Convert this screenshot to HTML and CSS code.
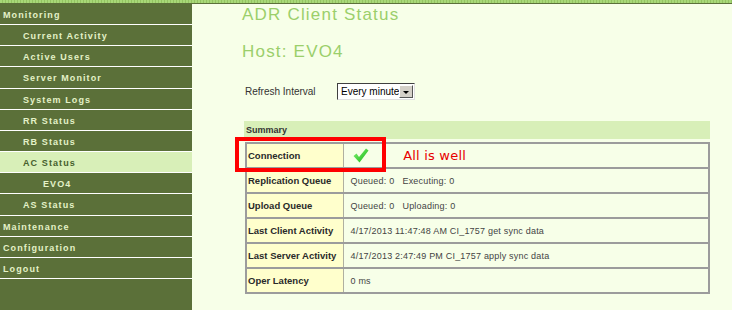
FILE: index.html
```html
<!DOCTYPE html>
<html lang="en">
<head>
    <meta charset="UTF-8">
    <title>ADR Client Status</title>
    <link rel="stylesheet" href="styles.css">
</head>
<body>
    <div class="top-strip"></div>
    <div class="layout">
        <nav class="sidebar">
            <a class="nav-item lvl0">Monitoring</a>
            <a class="nav-item lvl1">Current Activity</a>
            <a class="nav-item lvl1">Active Users</a>
            <a class="nav-item lvl1">Server Monitor</a>
            <a class="nav-item lvl1">System Logs</a>
            <a class="nav-item lvl1">RR Status</a>
            <a class="nav-item lvl1">RB Status</a>
            <a class="nav-item lvl1 active">AC Status</a>
            <a class="nav-item lvl2">EVO4</a>
            <a class="nav-item lvl1">AS Status</a>
            <a class="nav-item lvl0">Maintenance</a>
            <a class="nav-item lvl0">Configuration</a>
            <a class="nav-item lvl0">Logout</a>
        </nav>

        <main class="content">
            <h1>ADR Client Status</h1>
            <h2>Host: EVO4</h2>

            <div class="refresh-row">
                <span class="refresh-label">Refresh Interval</span>
                <div class="select-box">
                    <span class="select-value">Every minute</span>
                    <span class="select-btn"><span class="arrow"></span></span>
                </div>
            </div>

            <div class="summary-bar">Summary</div>

            <div class="table-wrap">
                <table class="status-table">
                    <tr>
                        <td class="label">Connection</td>
                        <td class="value">
                            <svg class="check" width="16" height="15" viewBox="0 0 16 15">
                                <defs>
                                    <linearGradient id="cg" x1="0" y1="0" x2="1" y2="1">
                                        <stop offset="0" stop-color="#8af57a"/>
                                        <stop offset="1" stop-color="#0fb40f"/>
                                    </linearGradient>
                                </defs>
                                <path d="M0.5 8 L3.5 5.5 L6 9 L13 0.5 L15.5 2.5 L6.5 14.5 Z" fill="url(#cg)"/>
                            </svg>
                            <span class="ok-text">All is well</span>
                        </td>
                    </tr>
                    <tr>
                        <td class="label">Replication Queue</td>
                        <td class="value">Queued: 0&nbsp;&nbsp; Executing: 0</td>
                    </tr>
                    <tr>
                        <td class="label">Upload Queue</td>
                        <td class="value">Queued: 0&nbsp;&nbsp; Uploading: 0</td>
                    </tr>
                    <tr>
                        <td class="label">Last Client Activity</td>
                        <td class="value">4/17/2013 11:47:48 AM CI_1757 get sync data</td>
                    </tr>
                    <tr>
                        <td class="label">Last Server Activity</td>
                        <td class="value">4/17/2013 2:47:49 PM CI_1757 apply sync data</td>
                    </tr>
                    <tr>
                        <td class="label">Oper Latency</td>
                        <td class="value">0 ms</td>
                    </tr>
                </table>
                <div class="highlight-box"></div>
            </div>
        </main>
    </div>
</body>
</html>
```

FILE: styles.css
```css
body {
    margin: 0;
    background-color: #f7ffe8;
    font-family: "Liberation Sans", Arial, sans-serif;
    overflow: hidden;
}
.top-strip {
    height: 3px;
    background: repeating-linear-gradient(90deg, #a8d878 0 2px, #94c462 2px 3px);
    border-bottom: 1px solid #5b7039;
}
.layout {
    display: flex;
    min-height: 306px;
}
.sidebar {
    width: 192px;
    flex-shrink: 0;
    background-color: #5b7039;
    display: flex;
    flex-direction: column;
}
.nav-item {
    display: block;
    box-sizing: border-box;
    height: 21.17px;
    padding-top: 2px;
    line-height: 18px;
    border-bottom: 1px solid #ffffff;
    color: #e4f2c8;
    font-size: 9px;
    font-weight: bold;
    letter-spacing: 1.1px;
    white-space: nowrap;
}
.lvl0 {
    padding-left: 3px;
}
.lvl1 {
    padding-left: 23px;
}
.lvl2 {
    padding-left: 43px;
}
.nav-item.active {
    background-color: #d8efb8;
    color: #46602c;
}
.content {
    flex: 1;
    padding-left: 50px;
}
h1 {
    margin: 1px 0 0 0;
    font-size: 17px;
    line-height: 20px;
    font-weight: normal;
    letter-spacing: 1.2px;
    color: #9bcf6b;
}
h2 {
    margin: 17px 0 0 0;
    font-size: 17px;
    line-height: 20px;
    font-weight: normal;
    letter-spacing: 1.2px;
    color: #9bcf6b;
}
.refresh-row {
    display: flex;
    align-items: center;
    margin-top: 21px;
    height: 17px;
}
.refresh-label {
    width: 92px;
    margin-left: 3px;
    font-size: 10px;
    color: #333;
}
.select-box {
    display: flex;
    align-items: center;
    box-sizing: border-box;
    width: 78px;
    height: 17px;
    background: #fff;
    border-top: 1px solid #404040;
    border-left: 1px solid #404040;
    border-right: 1px solid #e0e0e0;
    border-bottom: 1px solid #e0e0e0;
}
.select-value {
    flex: 1;
    min-width: 0;
    padding-left: 3px;
    font-size: 10px;
    line-height: 15px;
    white-space: nowrap;
    overflow: hidden;
    color: #000;
}
.select-btn {
    display: flex;
    align-items: center;
    justify-content: center;
    flex-shrink: 0;
    box-sizing: border-box;
    width: 14px;
    height: 13px;
    margin-right: 1px;
    background: #d4d0c8;
    border-top: 1px solid #fff;
    border-left: 1px solid #fff;
    border-right: 1px solid #555;
    border-bottom: 1px solid #555;
}
.arrow {
    width: 0;
    height: 0;
    margin-top: 2px;
    border-left: 3px solid transparent;
    border-right: 3px solid transparent;
    border-top: 3px solid #000;
}
.summary-bar {
    margin: 21px 0 0 2px;
    width: 466px;
    height: 18px;
    box-sizing: border-box;
    padding: 1px 0 0 2px;
    line-height: 17px;
    background-color: #d8efb8;
    font-size: 9px;
    font-weight: bold;
    color: #333;
}
.table-wrap {
    position: relative;
    margin: 3px 0 0 3px;
    width: 465px;
}
.status-table {
    width: 465px;
    border-collapse: collapse;
    border-left: 2px solid #9c9c9c;
    border-right: 2px solid #9c9c9c;
}
.status-table td {
    height: 25px;
    padding: 0;
    border-top: 2px solid #9c9c9c;
    border-bottom: 2px solid #9c9c9c;
    box-sizing: border-box;
}
.label {
    width: 97px;
    padding-left: 1px !important;
    background-color: #ffffcc;
    border-right: 1px solid #b0b0a0;
    font-size: 9.5px;
    font-weight: bold;
    color: #2a2a2a;
    white-space: nowrap;
}
.value {
    padding-left: 7px !important;
    background-color: #f7ffe8;
    font-size: 9px;
    letter-spacing: 0.2px;
    color: #444;
    white-space: nowrap;
}
.check {
    vertical-align: middle;
    margin-left: 2px;
}
.ok-text {
    margin-left: 32px;
    font-family: "DejaVu Sans", Verdana, sans-serif;
    font-size: 13px;
    letter-spacing: 0.2px;
    color: #e80000;
    vertical-align: middle;
}
.highlight-box {
    position: absolute;
    left: -10px;
    top: -5px;
    width: 151px;
    height: 35px;
    box-sizing: border-box;
    border: 4px solid #ff0000;
}
```
